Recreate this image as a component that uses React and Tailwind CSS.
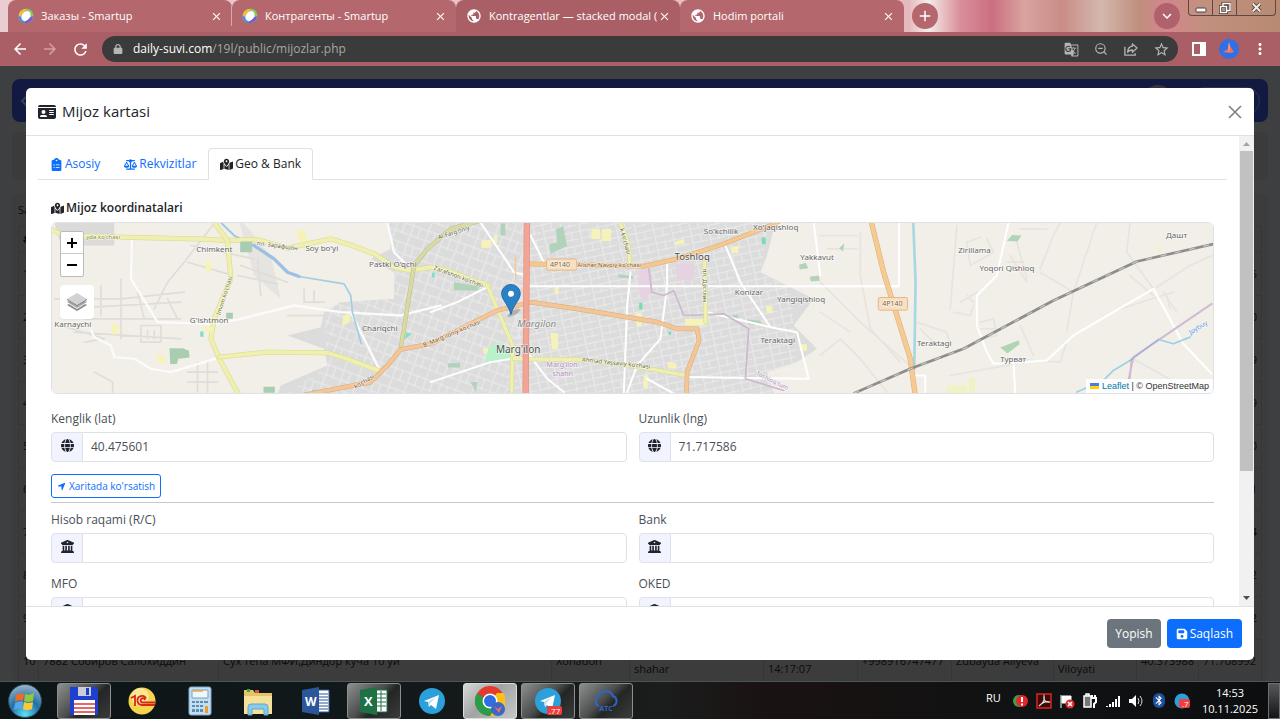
/* App.jsx */
import React, { useState } from 'react';
import {
  FaIdCard, FaClipboardList, FaScaleBalanced, FaMapLocationDot,
  FaGlobe, FaLocationArrow, FaBuildingColumns, FaFloppyDisk, FaLock
} from 'react-icons/fa6';
import {
  MdArrowBack, MdArrowForward, MdRefresh, MdClose, MdAdd, MdPublic,
  MdExpandMore, MdGTranslate, MdStarBorder, MdMoreVert, MdBluetooth
} from 'react-icons/md';
import { ZoomOut } from 'lucide-react';

/* ----------------- DATA ----------------- */
const BROWSER_TABS = [
  { title: 'Заказы - Smartup', icon: 'smartup', divider: true },
  { title: 'Контрагенты - Smartup', icon: 'smartup' },
  { title: 'Kontragentlar — stacked modal (', icon: 'globe', active: true },
  { title: 'Hodim portali', icon: 'globe' },
];

const CARD_TABS = [
  { key: 'asosiy', label: 'Asosiy', Icon: FaClipboardList },
  { key: 'rekvizit', label: 'Rekvizitlar', Icon: FaScaleBalanced },
  { key: 'geo', label: 'Geo & Bank', Icon: FaMapLocationDot },
];

const ROW_ENDINGS = ['5', '0', '9', '9', '0', '1', '4', '2', '2'];

/* ----------------- BROWSER ----------------- */
const SmartupIcon = () => (
  <svg viewBox="0 0 16 16" className="size-4 shrink-0">
    <ellipse cx="8" cy="8" rx="7.5" ry="7" fill="#7db6e8" />
    <path d="M1 9C0 4 5 0 9 1L6 5z" fill="#f2c230" />
    <path d="M8 1c5-1 8 4 7 8l-4-2z" fill="#8cc65a" />
    <path d="M15 8c0 5-5 8-9 7l5-5z" fill="#7a5bc4" />
    <path d="M1 8c0 4 3 7 6 7l-2-5z" fill="#3d8de0" />
    <ellipse cx="8" cy="8" rx="4" ry="5.4" fill="#fff" transform="rotate(40 8 8)" />
  </svg>
);

const BrowserTab = ({ tab }) => (
  <div className={`flex h-full w-56 min-w-0 items-center rounded-t-lg pl-[10px] ${tab.active ? 'bg-[#aa5f66]' : 'bg-[#b4676c]'}`}>
    {tab.icon === 'smartup' ? <SmartupIcon /> : <MdPublic className="size-4 shrink-0 text-white" />}
    <span className="ml-[7px] min-w-0 flex-1 overflow-hidden text-[11px] whitespace-nowrap text-white">{tab.title}</span>
    <button aria-label="Close tab" className="text-white"><MdClose size={13} /></button>
    <span className={`ml-2 h-5 w-px ${tab.divider ? 'bg-[#dba9ad]' : 'bg-transparent'}`} />
  </div>
);

const TabStrip = () => (
  <div className="flex h-8 shrink-0 items-center bg-[linear-gradient(90deg,#e9cdd0_0%,#e5b9bd_71%,#f3eeea_72.5%,#d98f9c_75%,#cb6f80_77.5%,#d9a39f_80%,#c98d86_83%,#d3b8ae_86%,#c08e7d_89%,#d3868c_91%,#c2907f_94%,#b98a72_100%)] pl-2">
    {BROWSER_TABS.map((t) => <BrowserTab key={t.title} tab={t} />)}
    <button aria-label="New tab" className="ml-2 flex size-[26px] shrink-0 items-center justify-center rounded-full bg-[#b4676c] text-white"><MdAdd size={18} /></button>
    <button aria-label="Search tabs" className="ml-auto flex size-[26px] shrink-0 items-center justify-center rounded-full bg-[#b0626c] text-white"><MdExpandMore size={18} /></button>
    <div className="mr-1 ml-2 flex h-4 self-start overflow-hidden rounded-b border border-t-0 border-[#5d4842] text-white">
      <button aria-label="Minimize" className="flex w-6 items-center justify-center border-r border-[#5d4842]">
        <svg viewBox="0 0 12 10" className="h-[10px] w-3"><rect x="1" y="5" width="10" height="4" rx="1" fill="#fff" stroke="#4d403c" /></svg>
      </button>
      <button aria-label="Restore" className="flex w-6 items-center justify-center border-r border-[#5d4842]">
        <svg viewBox="0 0 12 12" className="size-3" fill="none"><path d="M4 4V1.500h7v7H8" stroke="#4d403c" strokeWidth="3" /><rect x="1.500" y="4.500" width="6" height="6" stroke="#4d403c" strokeWidth="3" /><path d="M4 4V1.500h7v7H8" stroke="#fff" strokeWidth="1.400" /><rect x="1.500" y="4.500" width="6" height="6" stroke="#fff" strokeWidth="1.400" /></svg>
      </button>
      <button aria-label="Close" className="flex w-[38px] items-center justify-center">
        <svg viewBox="0 0 12 12" className="size-[11px]"><path d="M2 2l8 8M10 2l-8 8" stroke="#4d403c" strokeWidth="4" /><path d="M2 2l8 8M10 2l-8 8" stroke="#f2ece8" strokeWidth="2.200" /></svg>
      </button>
    </div>
  </div>
);

const Toolbar = () => (
  <div className="flex h-[34px] shrink-0 items-center bg-[#aa5f66] pr-[11px] pl-[11px] text-white">
    <button aria-label="Back"><MdArrowBack size={18} /></button>
    <button aria-label="Forward" className="ml-3 text-[#d3a0a4]"><MdArrowForward size={18} /></button>
    <button aria-label="Reload" className="ml-3"><MdRefresh size={19} /></button>
    <div className="ml-3 flex h-[26px] flex-1 items-center rounded-full bg-[#3b3b3b] pr-2 pl-[11px] text-[#b5b5b5]">
      <FaLock size={10} />
      <span className="ml-[10px] flex-1 text-xs text-[#a6a6a6]"><span className="text-white">daily-suvi.com</span>/19l/public/mijozlar.php</span>
      <div className="flex items-center gap-[15px]">
        <MdGTranslate size={15} />
        <ZoomOut size={14} />
        <svg viewBox="0 0 16 16" className="size-[15px]" fill="none" stroke="currentColor" strokeWidth="1.400"><path d="M2 5v9h11v-2" /><path d="M10 2l5 4.500-5 4.500V8.500c-2.500 0-4 .5-5 2.500 0-4 2-6 5-6.500z" strokeLinejoin="round" /></svg>
        <MdStarBorder size={17} />
      </div>
    </div>
    <svg viewBox="0 0 14 14" className="ml-[14px] size-[14px]"><path fillRule="evenodd" d="M0 0h14v14H0zM2 2v10h6V2z" fill="#fff" /></svg>
    <svg viewBox="0 0 20 20" className="ml-[13px] size-5"><circle cx="10" cy="10" r="10" fill="#2f6fe8" /><path d="M10 3l1 4 4 6-4 1-7-1 5-3z" fill="#f2705e" /><path d="M10 3l1 4-1 6-1-3z" fill="#ff9a7d" /></svg>
    <button aria-label="Menu" className="ml-3"><MdMoreVert size={18} /></button>
  </div>
);

/* ----------------- PAGE BEHIND THE MODAL ----------------- */
const cell = 'border border-[#35353d] px-1';

const ClientsPage = () => (
  <div className="h-full overflow-hidden bg-[#3e3f40] px-3 pt-[13px] text-[11px] text-[#0b0b0c]">
    <div className="flex h-[43px] items-center rounded-lg bg-[#131a42] px-2">
      <svg viewBox="0 0 8 12" className="h-3 w-2"><path d="M7 1L2 6l5 5" fill="none" stroke="#3a3f55" strokeWidth="2" /></svg>
      <div className="ml-auto size-8 rounded-full bg-[#35363d]" />
      <div className="ml-4 h-7 w-[70px] rounded-full border border-[#2d3252]" />
    </div>
    <div className="mt-[10px] h-12 rounded-lg bg-[#3b3b3c]" />
    <div className="mt-[14px] rounded-lg bg-[#3c3c3d] px-[6px] pt-2">
      <div className="h-6">Sahifada</div>
      <table className="w-full table-fixed border-collapse">
        <colgroup>
          <col className="w-[20px]" /><col className="w-[180px]" /><col /><col className="w-[78px]" /><col className="w-[134px]" />
          <col className="w-[94px]" /><col className="w-[94px]" /><col className="w-[102px]" /><col className="w-[83px]" /><col className="w-[62px]" /><col className="w-[63px]" />
        </colgroup>
        <thead>
          <tr className="h-[26px]"><th className={`${cell} text-left`}>#</th><th colSpan={10} className={cell} /></tr>
        </thead>
        <tbody>
          {ROW_ENDINGS.map((end, i) => (
            <tr key={i} className="h-[43px]">
              <td className={cell}>{i + 1}</td><td className={cell} /><td className={cell} /><td className={cell} /><td className={cell} />
              <td className={cell} /><td className={cell} /><td className={cell} /><td className={cell} /><td className={cell} />
              <td className={`${cell} text-right`}>{end}</td>
            </tr>
          ))}
          <tr className="h-[43px] whitespace-nowrap">
            <td className={cell}>10</td>
            <td className={cell}>7882 Собиров Салохиддин</td>
            <td className={cell}>Сух тепа МФЙ,Диндор куча 10 уй</td>
            <td className={cell}>Xonadon</td>
            <td className={cell}><br />shahar</td>
            <td className={cell}><br />14:17:07</td>
            <td className={cell}>+998916747477</td>
            <td className={cell}>Zubayda Aliyeva</td>
            <td className={cell}><br />Viloyati</td>
            <td className={cell}>40.373988</td>
            <td className={cell}>71.708992</td>
          </tr>
        </tbody>
      </table>
    </div>
  </div>
);

/* ----------------- MAP ----------------- */
// Drawn at three units per pixel, in three neighbouring tiles
const Road = ({ d, color = '#eff0b0', edge = '#d6d98e', w = 12 }) => (
  <>
    <path d={d} stroke={edge} strokeWidth={w + 3} />
    <path d={d} stroke={color} strokeWidth={w} />
  </>
);

const Place = ({ x, y, size = 24, children, fill = '#666', ...rest }) => (
  <text x={x} y={y} fontSize={size} fill={fill} stroke="#ffffff" strokeOpacity="0.6" strokeWidth="4" paintOrder="stroke" {...rest}>{children}</text>
);

const CityMap = () => (
  <svg viewBox="33 21 3486 513" preserveAspectRatio="xMidYMid slice" className="block h-full w-full font-['Noto_Sans',sans-serif]" role="img" aria-label="Xarita">
    <defs>
      <pattern id="streetsA" width="54" height="42" patternUnits="userSpaceOnUse" patternTransform="rotate(-12)">
        <path d="M0 4H54M8 0V42M34 4V30M8 26H54" stroke="#ebebeb" strokeWidth="3" fill="none" />
      </pattern>
      <pattern id="streetsB" width="48" height="60" patternUnits="userSpaceOnUse" patternTransform="rotate(20)">
        <path d="M0 6H48M6 0V60M28 6V40M6 36H48" stroke="#ececec" strokeWidth="3" fill="none" />
      </pattern>
    </defs>
    <rect width="3600" height="600" fill="#f2efe8" />

    {/* built-up area */}
    <path d="M1040 0H2210L2180 120 2160 170 2250 215 2320 250 2260 330 2330 400 2270 440 2180 470 2210 560H700L720 510 860 450 850 400 740 360 840 335 850 290 900 260 1060 250 1060 170 990 130 1050 100z" fill="#dcdcdc" />
    <path d="M1040 0H1460V300L1390 560H700L860 450 850 290 900 260 1060 250 1060 170z" fill="url(#streetsB)" />
    <path d="M1460 0H2190L2160 170 2250 215 2260 330 2270 440 2180 560H1390z" fill="url(#streetsA)" />
    <path d="M40 21H220V90H60z" fill="#dcdad8" />
    <path d="M590 0L690 120 720 250 640 180z" fill="#e6e4e0" />

    {/* west */}
    <g fill="none" strokeLinejoin="round" strokeLinecap="round">
      <g stroke="#e0dcd8" strokeWidth="5">
        <path d="M515 30L430 140 380 200 340 280M440 140L560 175M450 90L640 130M40 250H240L430 230M60 280L420 260M130 310H420M240 190V370M180 210V300M290 230L310 310M100 350L420 370M130 380L190 370M300 330V380H360V330zM320 345V370M340 345V370M380 250L410 310M160 470L215 500V530M440 470H530M470 440V530M500 440V530M440 500H530M590 180L710 205M600 150L740 200M650 130L660 240M790 220V260H850M820 225V262M60 330L190 370M740 300H850" />
      </g>
      <g stroke="#fbfbfb" strokeWidth="7">
        <path d="M273 70L270 190 350 320 520 325 600 310 760 270 900 290 1080 300 1200 270M150 345L160 365 210 390 220 425 280 430 330 460 390 470 440 455 540 425M930 290L1020 470M1040 20L1060 110 1100 150" />
      </g>
      <path d="M540 21L580 60 640 90" stroke="#9ccbe0" strokeWidth="6" />
      <path d="M640 90L700 130 740 170 775 183" stroke="#9cbfe4" strokeWidth="10" />
      <path d="M775 183L910 205 930 240 935 290 962 385" stroke="#a4cde0" strokeWidth="5" />
      <Road d="M33 42Q60 60 120 62L480 70 560 75 650 72 740 98 870 70 940 92 1000 115 1060 155 1110 165 1170 155 1220 165 1300 195 1345 210" />
      <Road d="M520 21L560 75 570 190 520 310 510 370 535 430 595 540" />
      <Road d="M535 425L680 410 860 412 920 430 1020 468" />
      <Road d="M1080 400L1120 150 1160 100 1230 40 1320 15" color="#d9d9a4" edge="#bdbd88" w={10} />
    </g>
    <path d="M598 78h36v32h-36zM556 292h20v18h-20zM386 398h40l18 8 2 20-34 4-4 16h-20zM668 514h34v18h-34z" fill="#a9cdb0" />
    <path d="M762 44l28 2 12 28-22 8zM495 136h16v32h-16zM212 326h20v30h-20zM348 418l28 4-2 20-26-4zM908 300l22-6-4 26-22 12zM492 334h22v16h-22z" fill="#f6f3b8" />
    <path d="M478 348h10v16h-10zM1095 352l18 2-20 18zM814 524h14v8h-14zM1174 172h8v14h-8z" fill="#80e0bf" />

    {/* centre */}
    <g transform="translate(1170 0)">
      <path d="M625 160h34l8 70-34 25-10-30zM735 145h56v50h-50z" fill="#e6d3e1" />
      <path d="M376 40l22-8 12 60-50 22-4-28 24-6zM70 200l76 12-6 14-70-2zM210 24h14v36h-14zM950 312l40 4 6 14-44-4zM1106 148l20-6 8 16-26 4zM1138 184l28-4 2 16-26 2zM50 444l38-2v14h-36zM120 500h20l-4 30zM564 176l44 6v8l-44-4zM908 298h16v16h-16z" fill="#b3d2ba" />
      <path d="M152 76l30-4-2 24-28 2zM482 40h26v30h-26zM514 40h28v36h-28zM735 78l26-8v14l-28 4zM360 352l22 2v48h-18zM480 282h12v14h-12zM640 480l12-2v40h-14zM764 310h60v20h-60zM904 92h20v20h-20zM1108 386h22v20h-22zM712 440l26 4v14h-26zM616 292h18v40h-14zM372 214h12v20h-12zM190 60h10v22h-10zM158 398h16v16h-16zM1006 272h20v20h-18z" fill="#f6f3b8" />
      <path d="M175 392l36-12v16l30 2 2 36-80 6z" fill="#b9f1ca" />
      <path d="M626 262h10v20h-10zM994 66h12v20h-12zM714 348h8v10h-8z" fill="#7bdcb4" />
      <g fill="none" strokeLinejoin="round" strokeLinecap="round">
        <g stroke="#fff" strokeWidth="6">
          <path d="M150 21L210 110 250 170 290 180M0 290L80 260 170 215M290 212H1405M600 170L590 270 580 530M710 140V210L690 370 620 450 590 530M885 90L930 200 1020 335 1100 350 1135 490M1020 335L830 290M770 485L1135 490M0 500L180 440 240 430M290 410L350 490 400 530M1150 21L1170 180M300 60L340 140M650 490L740 540" />
        </g>
        <path d="M655 160L664 230 700 240 730 225 760 300 880 295 955 340 945 490 1060 525" stroke="#cdb8cd" strokeWidth="5" />
        <Road d="M568 21Q600 80 597 145" w={10} />
        <Road d="M822 140L826 320" w={11} />
        <Road d="M170 210L246 390 243 540" w={10} />
        <Road d="M250 430L450 433 600 450 766 480" w={10} />
        <Road d="M-490 560L-180 500-130 450-90 402 0 385 130 320 200 285 300 260 440 280 680 320 740 340 800 340 806 375 770 470 768 540" color="#f3c697" edge="#dcaa76" w={11} />
        <Road d="M300 145L640 152 740 130 880 85 1020 30 1050 15" color="#f5c890" edge="#dcaa6c" w={11} />
        <path d="M255 125V190" stroke="#f5c890" strokeWidth="4" />
        <path d="M289 15L285 540" stroke="#e48e7d" strokeWidth="19" />
        <path d="M289 15L285 540" stroke="#f2a594" strokeWidth="15" />
      </g>
      <rect x="348" y="130" width="90" height="34" rx="5" fill="#f7dfbf" stroke="#e3b78c" strokeWidth="3" />
    </g>

    {/* east */}
    <g transform="translate(2340 0)">
      <g fill="none" strokeLinejoin="round" strokeLinecap="round">
        <g stroke="#e7e3df" strokeWidth="5">
          <path d="M410 30L390 280M500 70L520 110 450 150 440 80 480 65M570 120L620 200M590 80L620 190M560 140H610M600 40H680M420 260L470 230M440 240L460 260M400 290L450 300 460 270M480 320L520 310 530 360 490 370M480 340H525M660 160L700 60 720 21M660 170L760 230 830 21M760 230L740 350M930 21L920 110 1000 220M1010 215L1110 150 1175 120M900 280L1060 230M1030 230L1070 290M290 320L380 350 390 390M300 340L350 390M600 330L640 420M560 430L720 440 740 380M120 50L120 180 150 340 240 440M0 200L120 320 280 460M0 420L60 370 120 430 200 530M390 480L560 450 600 440M940 430L1100 520M1040 240L1050 280M930 180L1000 240M0 60H110M20 100H110M0 290L90 350" />
        </g>
        <g stroke="#fff" strokeWidth="6">
          <path d="M-10 212H236V21M565 21L530 180 470 240 470 330 500 410 520 445 680 435 760 360 1000 220 1090 385 1175 475M580 445L585 530M270 480H315V530" />
        </g>
        <path d="M279 21L286 200 282 460" stroke="#a6d8e2" strokeWidth="8" />
        <path d="M1175 265L940 425 925 495M935 430L925 530" stroke="#d0bbd2" strokeWidth="6" />
        <path d="M770 530L850 495 880 465 930 435M1015 372L1060 385 1110 365 1130 335" stroke="#9cd0e6" strokeWidth="5" />
        <path d="M1015 372L930 435" stroke="#9daede" strokeWidth="4" />
        <Road d="M152 15L190 170 270 430 285 540" color="#f5ca93" edge="#deae72" w={13} />
        <path d="M100 534L270 460 430 400 700 255 950 138 1185 84" stroke="#8d8d8d" strokeWidth="8" strokeLinecap="butt" />
        <path d="M100 534L270 460 430 400 700 255 950 138 1185 84" stroke="#c4c2be" strokeWidth="4" strokeDasharray="18 26" strokeLinecap="butt" />
      </g>
      <path d="M560 76l16-18 28 2-12 18zM540 396l56-22 2 12-36 28zM56 98l16-14-4 24z" fill="#b0d5b6" />
      <path d="M380 510h60v22h-60zM446 486h18v46h-18zM1004 92l20 4-4 20z" fill="#f1f2c4" />
      <rect x="174" y="246" width="88" height="38" rx="5" fill="#f7dfbf" stroke="#e3b78c" strokeWidth="3" />
    </g>

    {/* names */}
    <Place x="136" y="71" size="18" fill="#8a8a50">yda ko'chasi</Place>
    <Place x="466" y="110">Chimkent</Place>
    <Place x="648" y="88" size="18" transform="rotate(8 648 88)">пл. Зарафшон</Place>
    <Place x="794" y="105">Soy bo'yi</Place>
    <Place x="985" y="153">Pastki O'qchi</Place>
    <Place x="447" y="322">G'ishtmon</Place>
    <Place x="40" y="334">Karnaychi</Place>
    <Place x="964" y="346">Chariqchi</Place>
    <Place x="538" y="300" size="18" fill="#77773f" transform="rotate(-72 538 300)">Imom ko'chasi</Place>
    <Place x="1178" y="162" size="18" fill="#66663f" transform="rotate(20 1178 162)">Zarafshon ko'chasi</Place>
    <Place x="1194" y="72" size="18" fill="#66663f" transform="rotate(-18 1194 72)">Al-Farg'oniy</Place>
    <Place x="944" y="520" size="18" fill="#77552f" transform="rotate(-30 944 520)">ko'chasi</Place>
    <Place x="1150" y="396" size="18" fill="#77552f" transform="rotate(-23 1150 396)">B. Marg'iloniy ko'chasi</Place>
    <Place x="1610" y="154" size="18" fill="#77552f">Alisher Navoiy ko'chasi</Place>
    <Place x="1528" y="155" size="21" fill="#7d5d40">4P140</Place>
    <Place x="1624" y="438" size="18" fill="#66663f" transform="rotate(6 1624 438)">Ahmad Yassaviy ko'chasi</Place>
    <Place x="1988" y="160" size="18" fill="#66663f" transform="rotate(90 1988 160)">пл. Дўстлик</Place>
    <Place x="1738" y="40" size="18" fill="#66663f" transform="rotate(75 1738 40)">k ko'chasi</Place>
    <Place x="1430" y="336" size="29" fill="#858585" fontStyle="italic">Margilon</Place>
    <Place x="1366" y="413" size="30" fill="#505050">Marg'ilon</Place>
    <Place x="1518" y="455" size="21" fill="#b189bb">Marg'ilon</Place>
    <Place x="1536" y="482" size="21" fill="#b189bb">shahri</Place>
    <Place x="2146" y="478" size="18" fill="#b189bb" transform="rotate(26 2146 478)">Toshloq tum</Place>
    <Place x="1990" y="54">So'kchilik</Place>
    <Place x="2138" y="42">Xo'jaqishloq</Place>
    <Place x="1902" y="134" size="29" fill="#505050">Toshloq</Place>
    <Place x="2280" y="134">Yakkavut</Place>
    <Place x="2083" y="239">Konizar</Place>
    <Place x="2210" y="259">Yangiqishloq</Place>
    <Place x="2160" y="383">Teraktagi</Place>
    <Place x="2526" y="273" size="21" fill="#7d5d40">4P140</Place>
    <Place x="2754" y="112">Zirillama</Place>
    <Place x="2818" y="165">Yoqori Qishloq</Place>
    <Place x="2630" y="392">Teraktagi</Place>
    <Place x="2880" y="441">Турват</Place>
    <Place x="3378" y="66">Дашт</Place>
    <Place x="3452" y="358" size="20" fill="#6a9bdc" transform="rotate(-32 3452 358)">Joybuy</Place>

    {/* marker */}
    <ellipse cx="1420" cy="292" rx="22" ry="7" fill="#000" opacity="0.2" transform="rotate(-30 1420 292)" />
    <path d="M1411 297C1405 270 1383 252 1383 234a28 27 0 0 1 56 0C1439 252 1417 270 1411 297z" fill="#2a81c5" stroke="#1f6ba8" strokeWidth="3" />
    <circle cx="1411" cy="235" r="9" fill="#fff" />
  </svg>
);

const MapBox = () => (
  <div className="relative h-[172px] overflow-hidden rounded-md border border-[#dee2e6]">
    <CityMap />
    <div className="absolute top-2 left-2 flex flex-col gap-2">
      <div className="flex w-6 flex-col rounded-xs border border-[#bbb] bg-white text-black">
        <button aria-label="Zoom in" className="flex h-[22px] items-center justify-center border-b border-[#ccc]"><svg viewBox="0 0 10 10" className="size-[10px]"><path d="M0 5h10M5 0v10" stroke="currentColor" strokeWidth="2" /></svg></button>
        <button aria-label="Zoom out" className="flex h-[22px] items-center justify-center"><svg viewBox="0 0 10 10" className="size-[10px]"><path d="M0 5h10" stroke="currentColor" strokeWidth="2" /></svg></button>
      </div>
      <button aria-label="Layers" className="flex size-[34px] items-center justify-center rounded bg-white shadow-xs">
        <svg viewBox="0 0 20 20" className="size-5">
          <path d="M0 13l10 6 10-6-2-1-8 5-8-5z" fill="#8c8c8c" />
          <path d="M0 10l10 6 10-6-2-1-8 5-8-5z" fill="#a5a5a5" />
          <path d="M0 7l10-6 10 6-10 6z" fill="#d2d2d2" />
          <path d="M0 7l10 6 10-6v1l-10 6L0 8z" fill="#777" />
        </svg>
      </button>
    </div>
    <div className="absolute right-0 bottom-0 flex items-center gap-[3px] bg-white/90 px-1 font-['Liberation_Sans',sans-serif] text-[9px] leading-[14px] text-[#333]">
      <svg viewBox="0 0 9 6" className="h-[6px] w-[9px]"><path d="M0 0h9v3H0z" fill="#4c7be1" /><path d="M0 3h9v3H0z" fill="#ffd500" /></svg>
      <span><a href="#leaflet" className="text-[#0078a8]">Leaflet</a> | © OpenStreetMap</span>
    </div>
  </div>
);

/* ----------------- MODAL ----------------- */
const Field = ({ id, label, Icon, value = '' }) => (
  <div>
    <label htmlFor={id} className="block h-[22px] text-xs leading-[18px] text-[#495057]">{label}</label>
    <div className="flex h-[30px]">
      <span className="flex w-8 shrink-0 justify-center rounded-l border border-[#dee2e6] bg-[#f1f4ff] pt-[6px] text-[#212529]"><Icon size={13} /></span>
      <input id={id} type="text" defaultValue={value} className="-ml-px min-w-0 flex-1 rounded-r border border-[#dee2e6] bg-white px-2 text-xs text-[#495057] outline-none" />
    </div>
  </div>
);

const ClientModal = () => {
  const [tab, setTab] = useState('geo');

  return (
    <div role="dialog" aria-labelledby="modal-title" className="flex min-w-0 flex-1 flex-col overflow-hidden rounded-[5px] bg-white text-[#212529]">
      <div className="flex h-12 shrink-0 items-center border-b border-[#dee2e6] px-3">
        <FaIdCard size={18} />
        <h5 id="modal-title" className="ml-[6px] text-[15px]">Mijoz kartasi</h5>
        <button aria-label="Close" className="ml-auto text-[#808080]">
          <svg viewBox="0 0 14 14" className="size-[14px]"><path d="M1 1l12 12M13 1L1 13" stroke="currentColor" strokeWidth="1.600" /></svg>
        </button>
      </div>

      <div className="flex min-h-0 flex-1">
        <div className="min-w-0 flex-1 overflow-hidden px-3 pt-3">
          <div role="tablist" className="flex h-8 border-b border-[#dee2e6] text-xs">
            {CARD_TABS.map(({ key, label, Icon }) => (
              <button
                key={key}
                role="tab"
                aria-selected={tab === key}
                onClick={() => setTab(key)}
                className={`-mb-px flex h-8 items-center gap-[2px] rounded-t border px-[11px] ${tab === key ? 'border-[#dee2e6] border-b-white bg-white text-[#212529]' : 'border-transparent text-[#0d6efd]'}`}
              >
                <Icon className="h-[13px] w-auto" />{label}
              </button>
            ))}
          </div>

          <div className="px-[13px] pt-[18px]">
            <h6 className="flex h-6 items-center gap-[2px] pb-1 text-xs font-semibold"><FaMapLocationDot className="h-[13px] w-auto" />Mijoz koordinatalari</h6>
            <MapBox />
            <div className="mt-4 grid grid-cols-2 gap-x-3">
              <Field id="lat" label="Kenglik (lat)" Icon={FaGlobe} value="40.475601" />
              <Field id="lng" label="Uzunlik (lng)" Icon={FaGlobe} value="71.717586" />
            </div>
            <button className="mt-3 flex h-6 items-center gap-[3px] rounded-[3px] border border-[#0d6efd] px-[5px] text-[10px] text-[#0d6efd]"><FaLocationArrow size={9} />Xaritada ko'rsatish</button>
            <hr className="mt-1 border-[#c8c9ca]" />
            <div className="mt-2 grid grid-cols-2 gap-x-3 gap-y-3">
              <Field id="account" label="Hisob raqami (R/C)" Icon={FaBuildingColumns} />
              <Field id="bank" label="Bank" Icon={FaBuildingColumns} />
              <Field id="mfo" label="MFO" Icon={FaBuildingColumns} />
              <Field id="oked" label="OKED" Icon={FaBuildingColumns} />
            </div>
          </div>
        </div>

        {/* scrollbar */}
        <div className="flex w-[15px] shrink-0 flex-col items-center bg-[#f1f1f1]">
          <svg viewBox="0 0 15 15" className="size-[15px]"><path d="M4 10l3.500-4 3.500 4z" fill="#a3a3a3" /></svg>
          <div className="h-[320px] w-[13px] bg-[#c1c1c1]" />
          <svg viewBox="0 0 15 15" className="mt-auto size-[15px]"><path d="M4 5l3.500 4L11 5z" fill="#505050" /></svg>
        </div>
      </div>

      <div className="flex h-[54px] shrink-0 items-center justify-end gap-[6px] border-t border-[#dee2e6] px-3 text-xs text-white">
        <button className="h-[29px] rounded bg-[#6c757d] px-2">Yopish</button>
        <button className="flex h-[29px] items-center gap-[2px] rounded bg-[#0d6efd] px-[9px]"><FaFloppyDisk size={12} />Saqlash</button>
      </div>
    </div>
  );
};

/* ----------------- TASKBAR ----------------- */
const Plane = ({ badge }) => (
  <svg viewBox="0 0 30 30" className="size-[30px]">
    <circle cx="15" cy="15" r="13" fill="#2ba0da" />
    <path d="M7 15l15-6-3 14-5-4-2 2-1-5z" fill="#fff" />
    <path d="M11 16l8-5-6 6-1 4z" fill="#b9d9ec" />
    {badge && <rect x="14" y="20" width="15" height="9" rx="2" fill="#ee3e3e" />}
    {badge && <text x="16" y="28" fontSize="8" fill="#fff">{badge}</text>}
  </svg>
);

const TASK_ITEMS = [
  {
    name: 'Total Commander', state: 'open', icon: (
      <svg viewBox="0 0 30 30" className="size-[30px]"><path d="M1 1h26l2 3v25H1z" fill="#1f3fd0" /><path d="M9 1h13v9H9z" fill="#c9ced8" /><path d="M17 2h3v7h-3z" fill="#1f3fd0" /><path d="M5 14h21v15H5z" fill="#fff" /><path d="M5 18h21M5 22h21M5 26h21" stroke="#e03434" strokeWidth="1.300" /></svg>
    ),
  },
  {
    name: '1C', icon: (
      <svg viewBox="0 0 30 30" className="size-[30px]"><circle cx="15" cy="15" r="13.500" fill="#f6d54d" /><circle cx="13" cy="11" r="9" fill="#fbe894" /><path d="M4 12l4-2v10M19 12.500a4.500 4.500 0 1 0-4 6.500h13M18 14a2.200 2.200 0 1 0-3 2.500h13" fill="none" stroke="#d8261c" strokeWidth="1.800" /></svg>
    ),
  },
  {
    name: 'Calculator', icon: (
      <svg viewBox="0 0 30 30" className="size-[30px]"><rect x="4" y="1" width="22" height="28" rx="2" fill="#c4dff0" stroke="#7fadcc" /><path d="M7 4h16v8H7z" fill="#eef8fc" stroke="#7b9eb8" /><path d="M8 5h10" stroke="#f0a440" strokeWidth="1.500" /><g fill="#5d8fb6"><path d="M7 15h3v2H7zM11 15h3v2h-3zM15 15h3v2h-3zM19 15h4v2h-4zM7 19h3v2H7zM11 19h3v2h-3zM15 19h3v2h-3zM7 23h3v3H7zM11 23h3v3h-3zM15 23h3v3h-3z" /></g><path d="M20 20h3v7h-3z" fill="#f19a2d" /></svg>
    ),
  },
  {
    name: 'Explorer', icon: (
      <svg viewBox="0 0 30 30" className="size-[30px]"><path d="M1 4h9l2 3h17v21H1z" fill="#e3c566" /><path d="M4 3h3v3H4z" fill="#3aa64c" /><path d="M12 4h4v3h-4z" fill="#d75840" /><path d="M1 10h28v18H1z" fill="#f6e19a" /><path d="M5 29v-8q0-3 3-3h14q3 0 3 3v8h-4v-6H9v6z" fill="#88cae9" stroke="#5da7d2" /></svg>
    ),
  },
  {
    name: 'Word', icon: (
      <svg viewBox="0 0 30 30" className="size-[30px]"><path d="M16 4h12v22H16z" fill="#fff" stroke="#2b579a" /><path d="M18 8h9M18 11h9M18 14h9M18 17h9M18 20h9M18 23h9" stroke="#2b579a" /><path d="M1 4l17-3v28L1 26z" fill="#2b579a" /><text x="4" y="20" fontSize="12" fontWeight="700" fill="#fff">W</text></svg>
    ),
  },
  {
    name: 'Excel', state: 'open', icon: (
      <svg viewBox="0 0 30 30" className="size-[30px]"><path d="M16 4h12v22H16z" fill="#fff" stroke="#1e7145" /><path d="M17 8h10M17 12h10M17 16h10M17 20h10M22 5v20" stroke="#1e7145" /><path d="M1 4l17-3v28L1 26z" fill="#1e7145" /><text x="5" y="20" fontSize="13" fontWeight="700" fill="#fff">X</text></svg>
    ),
  },
  { name: 'Telegram', icon: <Plane /> },
  {
    name: 'Chrome', state: 'active', icon: (
      <svg viewBox="0 0 30 30" className="size-[30px]"><circle cx="15" cy="15" r="15" fill="#e33b2e" /><path d="M15 15L2 7.500A15 15 0 0 0 15 30l7-11z" fill="#2a9d4a" /><path d="M15 15l7-8h6.500A15 15 0 0 1 15 30l7-11z" fill="#fbc116" /><circle cx="15" cy="15" r="7.500" fill="#fff" /><circle cx="15" cy="15" r="6" fill="#2f6fe0" /><circle cx="23" cy="23" r="7" fill="#3c66c8" /><path d="M19 20l4 3 4-3-3 7z" fill="#f2705e" /></svg>
    ),
  },
  { name: 'Telegram unread', state: 'open', icon: <Plane badge=".77" /> },
  {
    name: 'ATC', state: 'open', icon: (
      <svg viewBox="0 0 30 30" className="size-[30px]"><path d="M8 20a5 5 0 0 1-1-9 8 8 0 0 1 15-1 5.300 5.300 0 0 1 0 10" fill="none" stroke="#2f66c4" strokeWidth="2" /><text x="15" y="25" fontSize="7" fontWeight="700" textAnchor="middle" fill="#2f66c4">ATC</text></svg>
    ),
  },
];

const TASK_STATES = {
  open: 'border-[#8b8f90] bg-[linear-gradient(135deg,#8d8f8f_0%,#4c4e4e_45%,#242626_60%,#3a3c3c_100%)]',
  active: 'border-[#dcdede] bg-[linear-gradient(135deg,#d8dada_0%,#a2a4a4_45%,#c6c8c8_100%)]',
  idle: 'border-transparent',
};

const Tray = () => (
  <div className="flex items-center gap-[7px]">
    <svg viewBox="0 0 16 16" className="size-4"><circle cx="6" cy="8" r="6" fill="#3ba149" /><circle cx="9" cy="8" r="6" fill="#e3262b" /><path d="M9 4v5M9 10.500v2" stroke="#fff" strokeWidth="2" /></svg>
    <svg viewBox="0 0 16 16" className="size-4"><rect x="1" y="1" width="14" height="14" fill="#3a0b0b" stroke="#e2231a" strokeWidth="1.500" /><path d="M3 13c4-3 6-7 5-10-1 4 2 7 6 6-4-1-7 0-11 4" fill="none" stroke="#e9dada" strokeWidth="1.200" /></svg>
    <svg viewBox="0 0 16 16" className="size-4"><path d="M2 2v13M3 3h9v7H3z" fill="#fff" stroke="#fff" /><circle cx="11" cy="11" r="4.500" fill="#df2b2b" /><path d="M9 9l4 4M13 9l-4 4" stroke="#fff" strokeWidth="1.500" /></svg>
    <svg viewBox="0 0 16 16" className="size-4"><path d="M2 3h7v11H2zM4 1h3v2H4z" fill="#777" stroke="#fff" strokeWidth="1.500" /><path d="M9 5h5v4l-2 2v4M10 2v4M13 2v4" fill="none" stroke="#fff" strokeWidth="2" /></svg>
    <svg viewBox="0 0 16 16" className="size-4"><path d="M1 13h2v1H1zM4 11h2v3H4zM7 9h2v5H7zM10 6h2v8h-2zM13 3h2v11h-2z" fill="#fff" /></svg>
    <svg viewBox="0 0 16 16" className="size-4"><path d="M1 6h3l4-4v12l-4-4H1z" fill="#fff" /><path d="M10 5q2 3 0 6M12 3q4 5 0 10" fill="none" stroke="#ddd" /></svg>
    <span className="flex size-4 items-center justify-center"><span className="flex h-[15px] w-3 items-center justify-center rounded-full bg-[#1d4f9c] text-white"><MdBluetooth size={13} /></span></span>
    <svg viewBox="0 0 16 16" className="size-4"><circle cx="8" cy="8" r="7.500" fill="#2ba0da" /><rect x="5" y="6" width="11" height="9" rx="2" fill="#ee3e3e" /><text x="8" y="14" fontSize="8" fill="#fff">.7</text></svg>
  </div>
);

const Taskbar = () => (
  <div className="flex h-[38px] shrink-0 items-center border-t border-[#4b5457] bg-[linear-gradient(90deg,#0c1416_0%,#12191a_30%,#1b1c1c_52%,#1a1212_60%,#101213_80%,#0c0e0f_100%)] text-white">
    <button aria-label="Start" className="ml-2 shrink-0">
      <svg viewBox="0 0 34 34" className="size-[34px]">
        <defs><radialGradient id="orb" cx="0.5" cy="0.9" r="0.9"><stop offset="0" stopColor="#5fe0f5" /><stop offset="0.5" stopColor="#1f6fa8" /><stop offset="1" stopColor="#9cb6c6" /></radialGradient></defs>
        <circle cx="17" cy="17" r="16.500" fill="url(#orb)" stroke="#27475c" />
        <path d="M8 11q4-3 8-1l-1 7q-4-2-8 1z" fill="#ee6a2c" /><path d="M17 10q4 2 9-1l-1 8q-5 2-9 0z" fill="#93c83e" />
        <path d="M7 19q4-3 8-1l-1 7q-4-2-8 1z" fill="#55a8e8" /><path d="M16 18q4 2 9 0l-1 7q-5 2-9 0z" fill="#fcca33" />
      </svg>
    </button>
    <div className="ml-[15px] flex gap-1">
      {TASK_ITEMS.map((t) => (
        <button key={t.name} aria-label={t.name} className={`flex h-9 w-[54px] items-center justify-center rounded-[3px] border ${TASK_STATES[t.state ?? 'idle']}`}>{t.icon}</button>
      ))}
    </div>
    <span className="mr-3 ml-auto pb-1 text-[11px]">RU</span>
    <Tray />
    <div className="mr-[10px] ml-3 text-center text-[11px] leading-4"><div>14:53</div><div>10.11.2025</div></div>
    <button aria-label="Show desktop" className="h-9 w-3 border border-[#6d6f70] bg-[linear-gradient(180deg,#55585a,#141516)]" />
  </div>
);

/* ----------------- APP ----------------- */
export default function App() {
  return (
    <div className="flex h-screen flex-col overflow-hidden font-['Open_Sans','Noto_Sans',sans-serif]">
      <TabStrip />
      <Toolbar />
      <div className="relative min-h-0 flex-1">
        <ClientsPage />
        <div className="absolute inset-0 flex px-[26px] pt-[22px] pb-[21px]">
          <ClientModal />
        </div>
      </div>
      <Taskbar />
    </div>
  );
}
